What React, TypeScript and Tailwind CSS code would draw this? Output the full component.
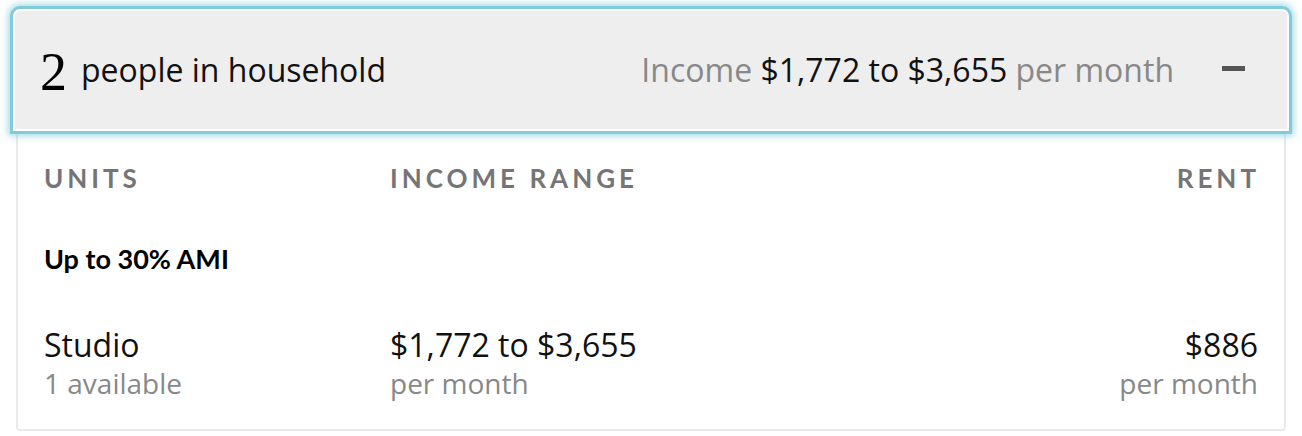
export default function App() {
  return (
    <div className="w-[1302px] h-[436px] bg-white overflow-hidden font-['Open_Sans',sans-serif]">
      <div className="px-[10px] pt-[6px]">
        {/* Household header (expanded) */}
        <button className="relative z-10 w-full h-[128px] flex items-center bg-[#eeeeee] rounded-t-[10px] border-[3px] border-[#80ccdd] shadow-[inset_0_0_0_2px_#ffffff,0_0_7px_2px_rgba(128,204,221,0.7)] pl-[27px] pr-[44px] text-left">
          <span className="font-['Liberation_Serif',serif] text-[54px] leading-none text-black mr-[14px] mt-[4px]">2</span>
          <span className="text-[32px] text-[#111]">people in household</span>
          <span className="ml-auto text-[32px] text-[#888]">
            Income <span className="text-[#111]">$1,772 to $3,655</span> per month
          </span>
          <span className="ml-[48px] w-[23px] h-[5px] bg-[#555] mt-[-3px]" />
        </button>

        {/* Table body */}
        <div className="mx-[6px] border-x-2 border-b-2 border-[#eaeaea] rounded-b-[4px] px-[26px] pt-[28px] pb-[28px]">
          <div className="flex items-center font-['Lato',sans-serif] font-bold text-[26px] leading-[32px] tracking-[4px] text-[#757575]">
            <span className="w-[346px]">UNITS</span>
            <span>INCOME RANGE</span>
            <span className="ml-auto -mr-[2px]">RENT</span>
          </div>
          <div className="mt-[49px] font-['Lato',sans-serif] font-bold text-[27px] leading-[32px] text-black">Up to 30% AMI</div>
          <div className="mt-[50px] flex">
            <div className="w-[346px]">
              <div className="text-[32px] leading-[40px] text-[#111]">Studio</div>
              <div className="text-[28px] leading-[36px] text-[#888]">1 available</div>
            </div>
            <div>
              <div className="text-[32px] leading-[40px] text-[#111]">$1,772 to $3,655</div>
              <div className="text-[28px] leading-[36px] text-[#888]">per month</div>
            </div>
            <div className="ml-auto text-right">
              <div className="text-[32px] leading-[40px] text-[#111]">$886</div>
              <div className="text-[28px] leading-[36px] text-[#888]">per month</div>
            </div>
          </div>
        </div>
      </div>
    </div>
  );
}
